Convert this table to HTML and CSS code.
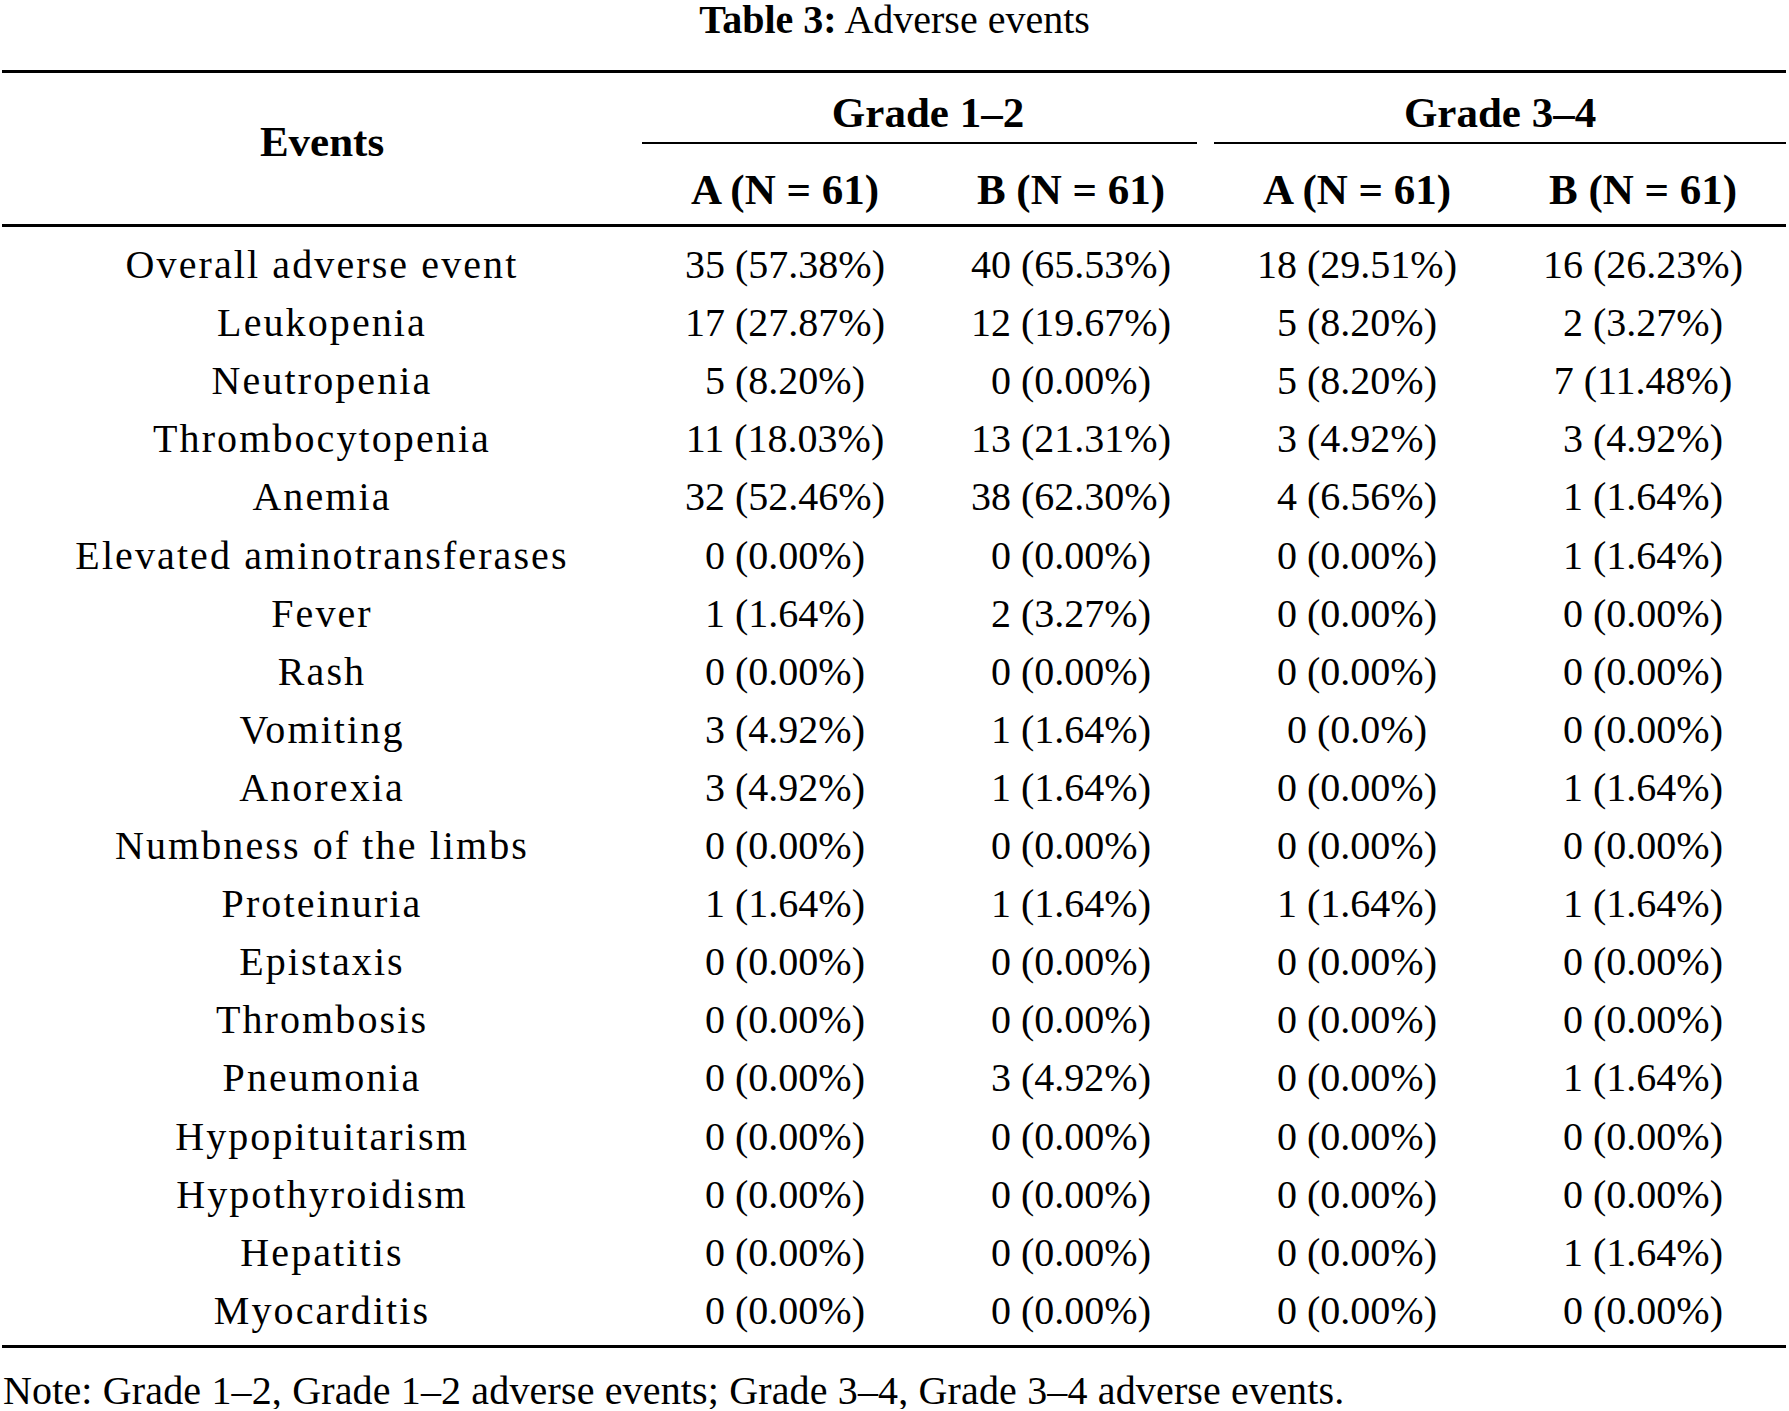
FILE: index.html
```html
<!DOCTYPE html>
<html lang="en">
<head>
<meta charset="utf-8">
<title>Table 3: Adverse events</title>
<link rel="stylesheet" href="styles.css">
</head>
<body>
<div class="page">
  <div class="caption"><b>Table 3:</b> Adverse events</div>
  <table class="ae">
    <colgroup>
      <col class="c-ev"><col class="c-n"><col class="c-n"><col class="c-n"><col class="c-n">
    </colgroup>
    <thead>
      <tr class="h1">
        <th rowspan="2" class="ev-h">Events</th>
        <th colspan="2" class="grp"><div class="grp-in grp-left">Grade 1–2</div></th>
        <th colspan="2" class="grp"><div class="grp-in">Grade 3–4</div></th>
      </tr>
      <tr class="h2">
        <th>A (N = 61)</th>
        <th>B (N = 61)</th>
        <th>A (N = 61)</th>
        <th>B (N = 61)</th>
      </tr>
    </thead>
    <tbody>
      <tr><td class="ev">Overall adverse event</td><td>35 (57.38%)</td><td>40 (65.53%)</td><td>18 (29.51%)</td><td>16 (26.23%)</td></tr>
      <tr><td class="ev">Leukopenia</td><td>17 (27.87%)</td><td>12 (19.67%)</td><td>5 (8.20%)</td><td>2 (3.27%)</td></tr>
      <tr><td class="ev">Neutropenia</td><td>5 (8.20%)</td><td>0 (0.00%)</td><td>5 (8.20%)</td><td>7 (11.48%)</td></tr>
      <tr><td class="ev">Thrombocytopenia</td><td>11 (18.03%)</td><td>13 (21.31%)</td><td>3 (4.92%)</td><td>3 (4.92%)</td></tr>
      <tr><td class="ev">Anemia</td><td>32 (52.46%)</td><td>38 (62.30%)</td><td>4 (6.56%)</td><td>1 (1.64%)</td></tr>
      <tr><td class="ev">Elevated aminotransferases</td><td>0 (0.00%)</td><td>0 (0.00%)</td><td>0 (0.00%)</td><td>1 (1.64%)</td></tr>
      <tr><td class="ev">Fever</td><td>1 (1.64%)</td><td>2 (3.27%)</td><td>0 (0.00%)</td><td>0 (0.00%)</td></tr>
      <tr><td class="ev">Rash</td><td>0 (0.00%)</td><td>0 (0.00%)</td><td>0 (0.00%)</td><td>0 (0.00%)</td></tr>
      <tr><td class="ev">Vomiting</td><td>3 (4.92%)</td><td>1 (1.64%)</td><td>0 (0.0%)</td><td>0 (0.00%)</td></tr>
      <tr><td class="ev">Anorexia</td><td>3 (4.92%)</td><td>1 (1.64%)</td><td>0 (0.00%)</td><td>1 (1.64%)</td></tr>
      <tr><td class="ev">Numbness of the limbs</td><td>0 (0.00%)</td><td>0 (0.00%)</td><td>0 (0.00%)</td><td>0 (0.00%)</td></tr>
      <tr><td class="ev">Proteinuria</td><td>1 (1.64%)</td><td>1 (1.64%)</td><td>1 (1.64%)</td><td>1 (1.64%)</td></tr>
      <tr><td class="ev">Epistaxis</td><td>0 (0.00%)</td><td>0 (0.00%)</td><td>0 (0.00%)</td><td>0 (0.00%)</td></tr>
      <tr><td class="ev">Thrombosis</td><td>0 (0.00%)</td><td>0 (0.00%)</td><td>0 (0.00%)</td><td>0 (0.00%)</td></tr>
      <tr><td class="ev">Pneumonia</td><td>0 (0.00%)</td><td>3 (4.92%)</td><td>0 (0.00%)</td><td>1 (1.64%)</td></tr>
      <tr><td class="ev">Hypopituitarism</td><td>0 (0.00%)</td><td>0 (0.00%)</td><td>0 (0.00%)</td><td>0 (0.00%)</td></tr>
      <tr><td class="ev">Hypothyroidism</td><td>0 (0.00%)</td><td>0 (0.00%)</td><td>0 (0.00%)</td><td>0 (0.00%)</td></tr>
      <tr><td class="ev">Hepatitis</td><td>0 (0.00%)</td><td>0 (0.00%)</td><td>0 (0.00%)</td><td>1 (1.64%)</td></tr>
      <tr><td class="ev">Myocarditis</td><td>0 (0.00%)</td><td>0 (0.00%)</td><td>0 (0.00%)</td><td>0 (0.00%)</td></tr>
    </tbody>
  </table>
  <div class="note">Note: Grade 1–2, Grade 1–2 adverse events; Grade 3–4, Grade 3–4 adverse events.</div>
</div>
</body>
</html>
```

FILE: styles.css
```css
html, body {
  margin: 0;
  padding: 0;
  background: #ffffff;
}

body {
  font-family: "Liberation Serif", "Times New Roman", serif;
  color: #000000;
  width: 1789px;
}

.page {
  padding: 0;
}

.caption {
  font-size: 40px;
  line-height: 40px;
  text-align: center;
  margin: 0 0 30px 0;
}

.caption b {
  font-weight: bold;
}

.ae {
  margin-left: 2px;
  width: 1784px;
  table-layout: fixed;
  border-collapse: separate;
  border-spacing: 0;
  border-top: 3px solid #000;
  border-bottom: 3px solid #000;
  font-size: 40px;
}

.c-ev { width: 640px; }
.c-n { width: 286px; }

.ae th,
.ae td {
  padding: 0;
  text-align: center;
  white-space: nowrap;
  line-height: 58.1px;
}

.ae th {
  font-weight: bold;
  font-size: 43px;
}

.ev-h {
  vertical-align: middle;
  border-bottom: 3px solid #000;
}

.ae th.ev-h {
  padding-bottom: 13px;
}

.h1 .grp {
  padding-top: 11px;
  vertical-align: top;
}

.grp-in {
  border-bottom: 2px solid #000;
  line-height: 58px;
}

.grp-left {
  margin-right: 17px;
  padding-left: 17px;
}

.h2 th {
  padding-top: 17px;
  padding-bottom: 5px;
  border-bottom: 3px solid #000;
}

.ae td.ev {
  letter-spacing: 2.1px;
}

.ae tbody tr:first-child td {
  padding-top: 9px;
}

.ae tbody tr:last-child td {
  padding-bottom: 5px;
}

.note {
  font-size: 40px;
  line-height: 36px;
  letter-spacing: 0.15px;
  margin: 25px 0 0 3px;
  white-space: nowrap;
}
```
